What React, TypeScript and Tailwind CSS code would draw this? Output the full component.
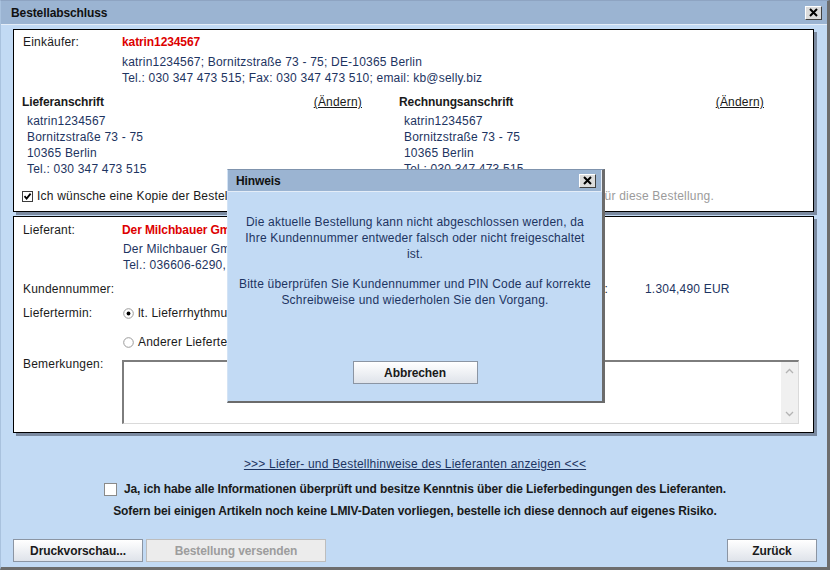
import React from 'react';

// Small 3D close box used in both title bars
const CloseBox: React.FC = () => (
  <div className="w-[17px] h-[14px] bg-[#dcdcdc] border border-t-white border-l-white border-r-[#404040] border-b-[#404040] flex items-center justify-center">
    <svg width="9" height="9" viewBox="0 0 9 9">
      <path d="M1 1 L8 8 M8 1 L1 8" stroke="#000" strokeWidth="2" />
    </svg>
  </div>
);

const CheckBox: React.FC<{ checked?: boolean; size?: number }> = ({ checked, size = 11 }) => (
  <svg width={size} height={size} viewBox={`0 0 ${size} ${size}`} className="shrink-0">
    <rect x="0.5" y="0.5" width={size - 1} height={size - 1} fill="#fff" stroke={checked ? '#3c3c3c' : '#8a8a8a'} />
    {checked && <path d="M2.5 5.2 L4.6 7.6 L8.6 2.6" stroke="#000" strokeWidth="1.8" fill="none" />}
  </svg>
);

const Radio: React.FC<{ checked?: boolean }> = ({ checked }) => (
  <svg width="11" height="11" viewBox="0 0 11 11" className="shrink-0">
    <circle cx="5.5" cy="5.5" r="4.8" fill="#fff" stroke="#9a9a9a" />
    {checked && <circle cx="5.5" cy="5.5" r="1.9" fill="#000" />}
  </svg>
);

const Address: React.FC = () => (
  <div className="pl-[5px] mt-[3px] text-[#1d3461]">
    <div>katrin1234567</div>
    <div>Bornitzstraße 73 - 75</div>
    <div>10365 Berlin</div>
    <div>Tel.: 030 347 473 515</div>
  </div>
);

const btn =
  'h-[23px] border border-[#8b95a3] bg-gradient-to-b from-white to-[#dfe3ea] font-bold tracking-[-0.1px] text-[#1a1a1a] flex items-center justify-center';

export default function App() {
  return (
    <div className="relative w-[830px] h-[570px] flex flex-col overflow-hidden bg-[#c2daf4] border-t border-l border-t-[#8ea4c2] border-l-[#a9c2de] border-r-[3px] border-b-[3px] border-r-[#6d6d6d] border-b-[#6d6d6d] font-['Liberation_Sans',Arial,sans-serif] text-[12px] leading-[16px] tracking-[0.2px] text-[#1a1a1a]">
      {/* Title bar */}
      <div className="h-[24px] shrink-0 flex items-center justify-between pl-[10px] pr-[5px] bg-[#9bb4d2] border-b border-[#e4edf8]">
        <span className="font-bold tracking-[-0.1px] text-[#111]">Bestellabschluss</span>
        <CloseBox />
      </div>

      <div className="flex-1 flex flex-col pl-[12px] pr-[10px] pt-[4px]">
        {/* Käufer / Adressen */}
        <div className="w-[801px] h-[183px] shrink-0 bg-white border border-black shadow-[3px_3px_0_#7b8aa0] pt-[4px]">
          <div className="flex">
            <div className="w-[108px] shrink-0 pl-[9px]">Einkäufer:</div>
            <div className="font-bold tracking-[-0.1px] text-[#dd0000]">katrin1234567</div>
          </div>
          <div className="pl-[108px] mt-[4px] text-[#1d3461]">
            <div>katrin1234567; Bornitzstraße 73 - 75; DE-10365 Berlin</div>
            <div>Tel.: 030 347 473 515; Fax: 030 347 473 510; email: kb@selly.biz</div>
          </div>

          <div className="flex pl-[8px] mt-[8px]">
            <div className="w-[340px]">
              <div className="flex justify-between">
                <span className="font-bold tracking-[-0.1px]">Lieferanschrift</span>
                <span className="underline">(Ändern)</span>
              </div>
              <Address />
            </div>
            <div className="w-[365px] ml-[37px]">
              <div className="flex justify-between">
                <span className="font-bold tracking-[-0.1px]">Rechnungsanschrift</span>
                <span className="underline">(Ändern)</span>
              </div>
              <Address />
            </div>
          </div>

          <div className="flex items-center pl-[8px] mt-[11px] whitespace-nowrap">
            <CheckBox checked />
            <span className="ml-[4px] w-[564px] overflow-hidden">
              Ich wünsche eine Kopie der Bestellung per E-Mail an kb@selly.biz
            </span>
            <span className="text-[#9b9b9b]">für diese Bestellung.</span>
          </div>
        </div>

        {/* Lieferant */}
        <div className="w-[801px] h-[217px] shrink-0 mt-[4px] bg-white border border-black shadow-[3px_3px_0_#7b8aa0] pt-[5px]">
          <div className="flex">
            <div className="w-[108px] shrink-0 pl-[9px]">Lieferant:</div>
            <div className="font-bold tracking-[-0.1px] text-[#dd0000]">Der Milchbauer GmbH</div>
          </div>
          <div className="pl-[109px] mt-[3px] text-[#1d3461]">
            <div>Der Milchbauer GmbH; Am Anger 4; DE-07907 Schleiz</div>
            <div>Tel.: 036606-6290, Fax: 036606-62929</div>
          </div>

          <div className="flex mt-[8px]">
            <div className="w-[108px] shrink-0 pl-[9px]">Kundennummer:</div>
            <div className="w-[486px] shrink-0 text-right">Bestellwert:</div>
            <div className="ml-[37px] text-[#1d3461]">1.304,490 EUR</div>
          </div>

          <div className="flex mt-[8px]">
            <div className="w-[108px] shrink-0 pl-[9px]">Liefertermin:</div>
            <div className="flex items-center gap-[4px] ml-[1px]">
              <Radio checked />
              <span>lt. Lieferrhythmus (nächster Liefertag)</span>
            </div>
          </div>
          <div className="flex items-center gap-[4px] ml-[109px] mt-[13px]">
            <Radio />
            <span>Anderer Liefertermin:</span>
          </div>

          <div className="flex mt-[6px]">
            <div className="w-[108px] shrink-0 pl-[9px]">Bemerkungen:</div>
            <div className="mt-[4px] w-[677px] h-[64px] flex border-t-2 border-l-2 border-[#7d7d7d] border-r border-b border-r-[#dadada] border-b-[#dadada]">
              <div className="flex-1" />
              <div className="w-[17px] bg-[#f0f0f0] flex flex-col justify-between items-center py-[6px]">
                <svg width="9" height="6" viewBox="0 0 9 6">
                  <path d="M1 5 L4.5 1.5 L8 5" stroke="#b4b4b4" strokeWidth="1.3" fill="none" />
                </svg>
                <svg width="9" height="6" viewBox="0 0 9 6">
                  <path d="M1 1 L4.5 4.5 L8 1" stroke="#b4b4b4" strokeWidth="1.3" fill="none" />
                </svg>
              </div>
            </div>
          </div>
        </div>

        {/* Hinweise + Bestätigung */}
        <div className="mt-[23px] flex justify-center">
          <span className="underline text-[#1d3461]">&gt;&gt;&gt; Liefer- und Bestellhinweise des Lieferanten anzeigen &lt;&lt;&lt;</span>
        </div>
        <div className="mt-[9px] flex justify-center items-center gap-[7px] font-bold tracking-[-0.1px]">
          <CheckBox size={13} />
          <span>Ja, ich habe alle Informationen überprüft und besitze Kenntnis über die Lieferbedingungen des Lieferanten.</span>
        </div>
        <div className="mt-[6px] text-center font-bold tracking-[-0.1px]">
          Sofern bei einigen Artikeln noch keine LMIV-Daten vorliegen, bestelle ich diese dennoch auf eigenes Risiko.
        </div>

        <div className="mt-[20px] flex items-center">
          <button className={`${btn} w-[130px]`}>Druckvorschau...</button>
          <button className="ml-[3px] w-[180px] h-[23px] border border-[#bdbdbd] bg-[#ececec] font-bold tracking-[-0.1px] text-[#9d9d9d]">
            Bestellung versenden
          </button>
          <button className={`${btn} ml-auto w-[90px]`}>Zurück</button>
        </div>
      </div>

      {/* Hinweis dialog */}
      <div className="absolute left-[226px] top-[168px] w-[378px] h-[234px] flex flex-col bg-[#c2daf4] border-t border-l border-t-[#7f93ad] border-l-[#d3e3f5] border-r-[3px] border-b-[2px] border-r-[#6b6b6b] border-b-[#6b6b6b]">
        <div className="h-[22px] shrink-0 flex items-center justify-between pl-[8px] pr-[5px] bg-[#9bb4d2] border-b border-r border-[#e4edf8]">
          <span className="font-bold tracking-[-0.1px] text-[#111]">Hinweis</span>
          <CloseBox />
        </div>
        <div className="pt-[22px] flex flex-col items-center text-center text-[#1d3461] whitespace-nowrap">
          <div>
            Die aktuelle Bestellung kann nicht abgeschlossen werden, da
            <br />
            Ihre Kundennummer entweder falsch oder nicht freigeschaltet
            <br />
            ist.
          </div>
          <div className="mt-[14px]">
            Bitte überprüfen Sie Kundennummer und PIN Code auf korrekte
            <br />
            Schreibweise und wiederholen Sie den Vorgang.
          </div>
          <button className={`${btn} mt-[53px] w-[125px]`}>Abbrechen</button>
        </div>
      </div>
    </div>
  );
}
